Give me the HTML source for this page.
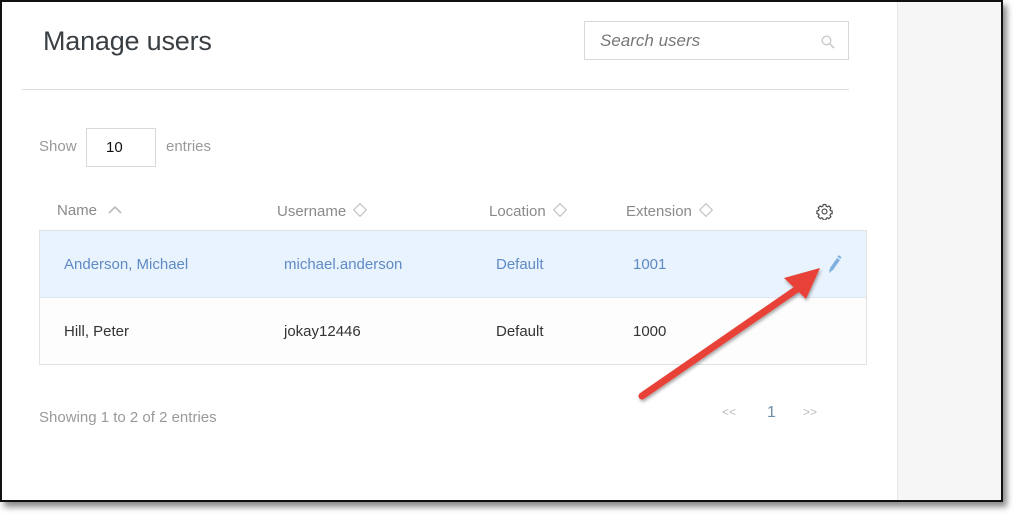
<!DOCTYPE html>
<html><head><style>
*{margin:0;padding:0;box-sizing:border-box}
body{width:1017px;height:517px;background:#fff;position:relative;overflow:hidden;font-family:"Liberation Sans",sans-serif}
.frame{position:absolute;left:0;top:0;width:1003px;height:502px;background:#fff;box-shadow:4px 5px 6px rgba(0,0,0,.45);overflow:hidden}
.bord{position:absolute;left:0;top:0;width:1003px;height:502px;border:2px solid #111}
.side{position:absolute;left:897px;top:0;width:110px;height:502px;background:#f6f6f6;border-left:1px solid #e6e6e6}
.abs{position:absolute;white-space:nowrap}
h1{position:absolute;left:43px;top:26px;font-weight:normal;font-size:27px;color:#3a3f44;letter-spacing:-.2px}
.search{position:absolute;left:584px;top:21px;width:265px;height:39px;border:1px solid #d8d8d8}
.search span{position:absolute;left:15px;top:9px;font-style:italic;font-size:17px;color:#777}
.hr{position:absolute;left:22px;top:89px;width:827px;height:1px;background:#dedede}
.g{color:#999;font-size:15px}
.box{position:absolute;left:86px;top:128px;width:70px;height:39px;border:1px solid #d8d8d8;font-size:15px;color:#111;padding:10px 0 0 19px}
.hd{color:#8a8a8a;font-size:15px}
.tbl{position:absolute;left:39px;top:230px;width:828px;height:135px;border:1px solid #e2e2e2;overflow:hidden}
.r1{position:absolute;left:0;top:0;width:100%;height:67px;background:#e8f3fd;border-bottom:1px solid #dde8f0}
.r2{position:absolute;left:0;top:67px;width:100%;height:66px;background:#fdfdfd}
.bl{color:#5f8ac4;font-size:15px}
.bk{color:#333;font-size:15px}
.dia{display:inline-block;width:10px;height:10px;border:1.5px solid #bbb;transform:rotate(45deg);margin-left:9px;vertical-align:1px}
</style></head><body>
<div class="frame">
<div class="side"></div>
<h1>Manage users</h1>
<div class="search"><span>Search users</span>
<svg style="position:absolute;left:236px;top:13px" width="14" height="14" viewBox="0 0 14 14"><circle cx="5.5" cy="5.5" r="4.3" fill="none" stroke="#ccc" stroke-width="1.4"/><line x1="8.5" y1="8.5" x2="13" y2="13" stroke="#ccc" stroke-width="1.8"/></svg></div>
<div class="hr"></div>
<div class="abs g" style="left:39px;top:138px">Show</div>
<div class="box">10</div>
<div class="abs g" style="left:166px;top:138px">entries</div>
<div class="abs hd" style="left:57px;top:202px">Name <svg width="16" height="10" viewBox="0 0 16 10" style="margin-left:6px"><polyline points="2,8 8,2 14,8" fill="none" stroke="#bbb" stroke-width="1.6"/></svg></div>
<div class="abs hd" style="left:277px;top:203px">Username<span class="dia"></span></div>
<div class="abs hd" style="left:489px;top:203px">Location<span class="dia"></span></div>
<div class="abs hd" style="left:626px;top:203px">Extension<span class="dia"></span></div>
<svg class="abs" style="left:816px;top:203px" width="17" height="17" viewBox="0 0 24 24"><path d="M12 2l2 .3.5 2.4 1.6.8 2.1-1.3 2.8 2.8-1.3 2.1.7 1.6 2.4.5v3.9l-2.4.5-.7 1.6 1.3 2.1-2.8 2.8-2.1-1.3-1.6.7-.5 2.4h-3.9l-.5-2.4-1.6-.7-2.1 1.3-2.8-2.8 1.3-2.1-.7-1.6-2.4-.5v-3.9l2.4-.5.7-1.6-1.3-2.1 2.8-2.8 2.1 1.3 1.6-.8.5-2.4z" fill="none" stroke="#444" stroke-width="1.6"/><circle cx="12" cy="12" r="3.5" fill="none" stroke="#444" stroke-width="1.6"/></svg>
<div class="tbl">
<div class="r1"></div><div class="r2"></div>
<div class="abs bl" style="left:24px;top:25px">Anderson, Michael</div>
<div class="abs bl" style="left:244px;top:25px">michael.anderson</div>
<div class="abs bl" style="left:456px;top:25px">Default</div>
<div class="abs bl" style="left:593px;top:25px">1001</div>
<svg class="abs" style="left:783px;top:22px" width="20" height="22" viewBox="0 0 20 22"><path d="M7 15 L14 5 L17 7 L10 17 Z" fill="#7fb0e0"/><path d="M7 15 L10 17 L6 20 Z" fill="#7fb0e0"/><path d="M15 3 L18 5" stroke="#7fb0e0" stroke-width="2"/></svg>
<div class="abs bk" style="left:24px;top:92px">Hill, Peter</div>
<div class="abs bk" style="left:244px;top:92px">jokay12446</div>
<div class="abs bk" style="left:456px;top:92px">Default</div>
<div class="abs bk" style="left:593px;top:92px">1000</div>
</div>
<div class="abs g" style="left:39px;top:409px">Showing 1 to 2 of 2 entries</div>
<div class="abs" style="left:722px;top:405px;font-size:12px;color:#bbb">&lt;&lt;</div>
<div class="abs" style="left:767px;top:404px;font-size:16px;color:#6f8fa8">1</div>
<div class="abs" style="left:803px;top:405px;font-size:12px;color:#bbb">&gt;&gt;</div>
<svg class="abs" style="left:0;top:0" width="1003" height="502"><defs><filter id="s"><feDropShadow dx="1" dy="2" stdDeviation="1.5" flood-opacity=".35"/></filter></defs><g filter="url(#s)"><line x1="642" y1="396" x2="800" y2="287" stroke="#e84238" stroke-width="7" stroke-linecap="round"/><polygon points="820,268 784,278 806,299" fill="#e84238"/></g></svg>
<div class="bord"></div>
</div>
</body></html>
